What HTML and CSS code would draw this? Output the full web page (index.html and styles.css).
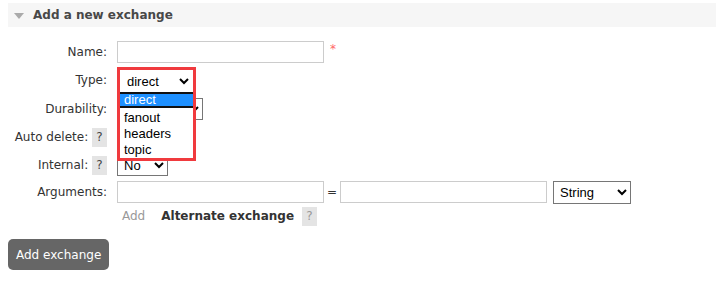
FILE: index.html
```html
<!DOCTYPE html>
<html>
<head>
<meta charset="utf-8">
<link rel="stylesheet" href="styles.css">
</head>
<body>
<div class="section">
  <h2 class="section-head"><span class="tri"></span>Add a new exchange</h2>
  <div class="form">
    <div class="row r-name">
      <div class="lbl">Name:</div>
      <div class="val"><input type="text" class="txt"><span class="req">*</span></div>
    </div>
    <div class="row r-type">
      <div class="lbl">Type:</div>
      <div class="val val-type">
        <select class="sel sel-type"><option>direct</option></select>
        <div class="popup">
          <select class="sel sel-pop"><option>direct</option></select>
          <ul class="opts">
            <li class="hl">direct</li>
            <li>fanout</li>
            <li>headers</li>
            <li>topic</li>
          </ul>
        </div>
      </div>
    </div>
    <div class="row r-dur">
      <div class="lbl">Durability:</div>
      <div class="val"><select class="sel sel-dur"><option>Durable</option></select></div>
    </div>
    <div class="row r-auto">
      <div class="lbl">Auto delete: <span class="help">?</span></div>
      <div class="val"><select class="sel sel-no"><option>No</option></select></div>
    </div>
    <div class="row r-int">
      <div class="lbl">Internal: <span class="help">?</span></div>
      <div class="val"><select class="sel sel-no"><option>No</option></select></div>
    </div>
    <div class="row r-args">
      <div class="lbl">Arguments:</div>
      <div class="val">
        <input type="text" class="txt">
        <span class="eq">=</span>
        <input type="text" class="txt">
        <select class="sel sel-str"><option>String</option></select>
      </div>
    </div>
    <div class="row r-add">
      <div class="lbl"></div>
      <div class="val"><span class="add">Add</span><span class="alt">Alternate exchange</span><span class="help help-light">?</span></div>
    </div>
  </div>
  <button class="btn">Add exchange</button>
</div>
</body>
</html>
```
FILE: styles.css
```css
html, body {
  background: #fff;
}
body {
  margin: 3px 0 0 8px;
  font-family: "DejaVu Sans", Verdana, sans-serif;
  font-size: 12px;
  color: #333;
}
.section-head {
  margin: 0;
  height: 24px;
  background: #f6f6f6;
  display: flex;
  align-items: center;
  font-size: 12px;
  font-weight: bold;
  color: #484848;
  padding-left: 6px;
}
.tri {
  width: 0;
  height: 0;
  border-left: 5px solid transparent;
  border-right: 5px solid transparent;
  border-top: 6px solid #aaa;
  margin-right: 9px;
  margin-top: 1px;
}
.form {
  margin-top: 11px;
}
.row {
  display: flex;
  align-items: center;
}
.r-name { height: 28px; }
.r-type { height: 28px; position: relative; z-index: 5; }
.r-dur { height: 29px; }
.r-auto { height: 28px; }
.r-int { height: 28px; }
.r-args { height: 26px; }
.r-add { height: 22px; }
.lbl {
  width: 99px;
  text-align: right;
  display: flex;
  justify-content: flex-end;
  align-items: center;
  white-space: pre;
}
.val {
  margin-left: 10px;
  display: flex;
  align-items: center;
}
.val-type {
  position: relative;
}
.txt {
  box-sizing: border-box;
  width: 207px;
  height: 22px;
  border: 1px solid #ccc;
  margin: 0;
  padding: 2px 4px;
}
.req {
  color: #f66;
  margin-left: 6px;
  margin-top: -6px;
  font-size: 12px;
}
.sel {
  font-family: "Liberation Sans", Arial, sans-serif;
  font-size: 13px;
  height: 22px;
  margin: 0;
  color: #000;
  background: #fff;
  border: 1px solid #767676;
  border-radius: 0;
  padding: 0 2px;
}
.sel-type { width: 74px; }
.sel-dur { width: 86px; }
.sel-no { width: 51px; }
.sel-str { width: 78px; height: 23px; margin-left: 6px; }
.help {
  display: inline-block;
  width: 15px;
  height: 19px;
  line-height: 19px;
  text-align: center;
  background: #e4e4e4;
  color: #444;
  font-size: 12px;
}
.help-light { color: #999; margin-left: 8px; }
.eq {
  margin: 0 3px 0 3px;
}
.add {
  color: #999;
  margin-left: 5px;
}
.alt {
  font-weight: bold;
  margin-left: 16px;
}
.popup {
  position: absolute;
  left: 0;
  top: -2px;
  z-index: 10;
  width: 73px;
  background: #fff;
  border: 3px solid #f03a3e;
}
.sel-pop {
  width: 73px;
  height: 22px;
  border-color: #fff;
  display: block;
}
.opts {
  list-style: none;
  margin: 0;
  padding: 0;
  border-top: 2px solid #111;
  font-family: "Liberation Sans", Arial, sans-serif;
  font-size: 13px;
  color: #000;
}
.opts li {
  height: 16px;
  line-height: 16px;
  padding-left: 4px;
}
.opts li.hl {
  background: #1e90ff;
  color: #fff;
  height: 12px;
  line-height: 12px;
  border-bottom: 2px solid #111;
  margin-bottom: 2px;
}
.btn {
  margin-top: 12px;
  height: 31px;
  padding: 0 8px;
  background: #666;
  color: #fff;
  border: none;
  border-radius: 5px;
  font-family: "DejaVu Sans", Verdana, sans-serif;
  font-size: 12px;
}
```
